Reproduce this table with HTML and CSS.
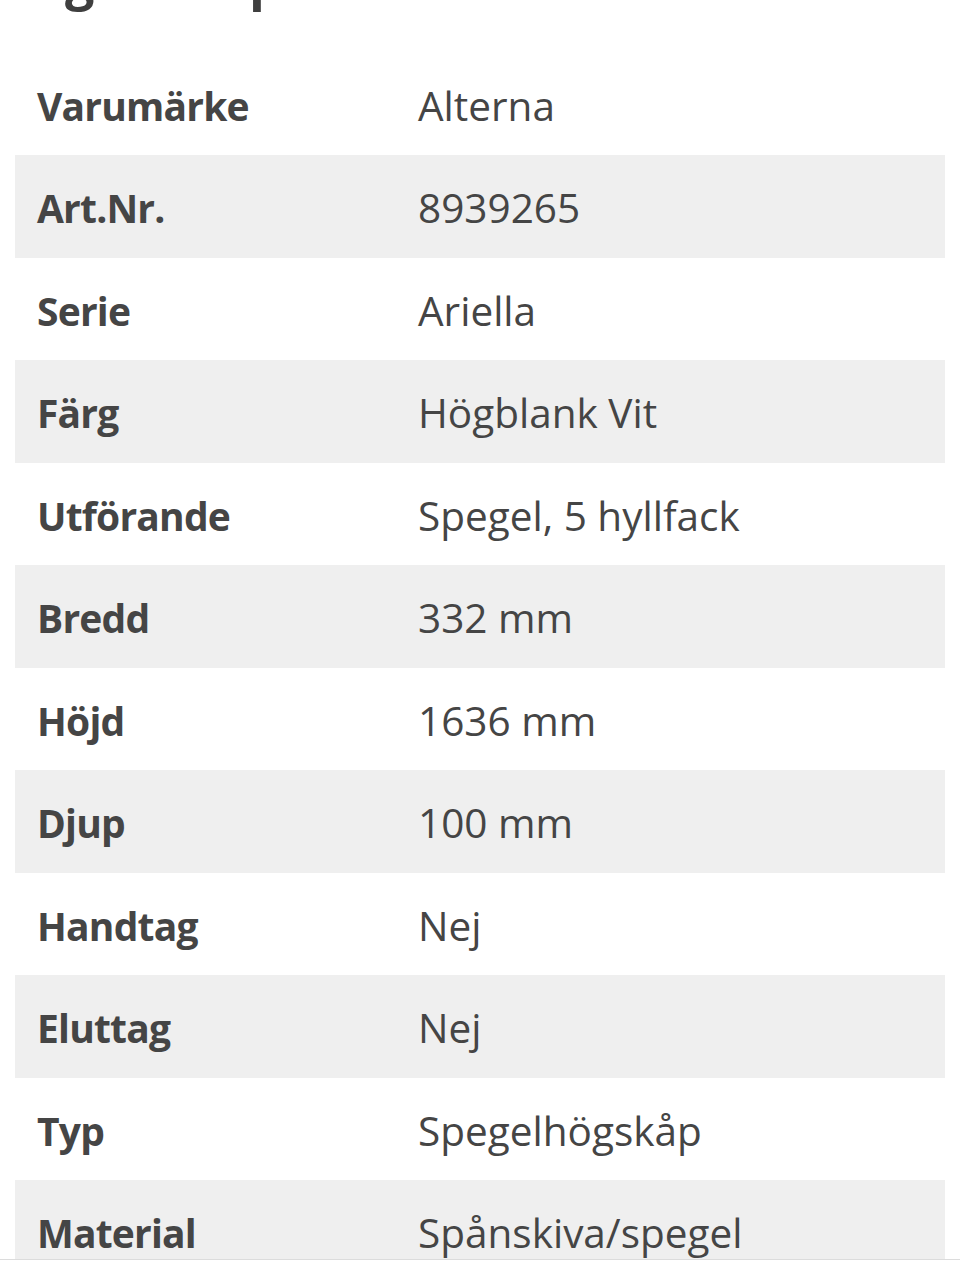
FILE: index.html
```html
<!DOCTYPE html>
<html lang="sv">
<head>
<meta charset="utf-8">
<title>Egenskaper</title>
<link rel="stylesheet" href="styles.css">
</head>
<body>
<main class="page">
  <h2 class="title">Egenskaper</h2>
  <div class="specs">
    <div class="row"><div class="label">Varumärke</div><div class="value">Alterna</div></div>
    <div class="row"><div class="label">Art.Nr.</div><div class="value">8939265</div></div>
    <div class="row"><div class="label">Serie</div><div class="value">Ariella</div></div>
    <div class="row"><div class="label">Färg</div><div class="value">Högblank Vit</div></div>
    <div class="row"><div class="label">Utförande</div><div class="value">Spegel, 5 hyllfack</div></div>
    <div class="row"><div class="label">Bredd</div><div class="value">332 mm</div></div>
    <div class="row"><div class="label">Höjd</div><div class="value">1636 mm</div></div>
    <div class="row"><div class="label">Djup</div><div class="value">100 mm</div></div>
    <div class="row"><div class="label">Handtag</div><div class="value">Nej</div></div>
    <div class="row"><div class="label">Eluttag</div><div class="value">Nej</div></div>
    <div class="row"><div class="label">Typ</div><div class="value">Spegelhögskåp</div></div>
    <div class="row"><div class="label">Material</div><div class="value">Spånskiva/spegel</div></div>
  </div>
</main>
<div class="bottom-bar"></div>
</body>
</html>
```
FILE: styles.css
```css
html, body {
  margin: 0;
  padding: 0;
  background: #ffffff;
}
body {
  font-family: "Open Sans", "Noto Sans", sans-serif;
  color: #454545;
  overflow: hidden;
  height: 1271px;
}
.page {
  padding: 0 15px;
}
.title {
  font-size: 52px;
  font-weight: 700;
  line-height: 52px;
  margin: -47px 0 0 21px;
  padding-bottom: 47.5px;
  color: #3f3f3f;
}
.specs {
  display: flex;
  flex-direction: column;
}
.row {
  display: grid;
  grid-template-columns: 381px 1fr;
  align-items: center;
  height: 102.5px;
  padding-left: 22px;
  padding-top: 3px;
  box-sizing: border-box;
  font-size: 40.5px;
}
.row:nth-child(even) {
  background: #efefef;
}
.label {
  font-weight: 700;
  font-size: 39px;
  letter-spacing: -0.8px;
}
.value {
  font-weight: 400;
}
.bottom-bar {
  position: fixed;
  left: 0;
  right: 0;
  bottom: 0;
  height: 11px;
  background: #ffffff;
  border-top: 1px solid #dcdcdc;
}
```
